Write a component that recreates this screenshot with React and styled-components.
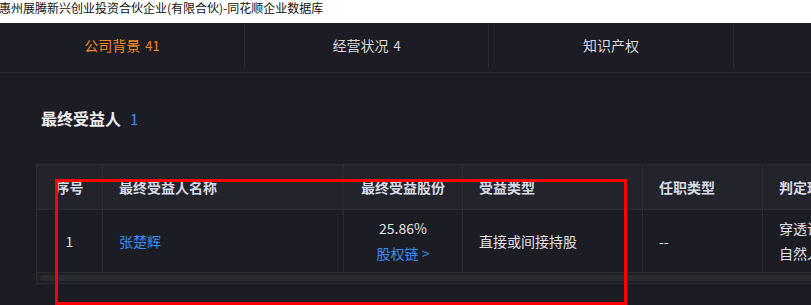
import React from 'react'
import styled, { createGlobalStyle } from 'styled-components'

const GlobalStyle = createGlobalStyle`
  html, body {
    margin: 0;
    padding: 0;
    background: #1c1c24;
    overflow: hidden;
    font-family: "Noto Sans CJK SC", "Noto Sans", sans-serif;
  }
`

const Page = styled.div`
  position: relative;
  width: 811px;
  height: 305px;
  overflow: hidden;
  background: #1c1c24;
`

const TitleBar = styled.div`
  height: 23px;
  background: #fff;
  color: #111;
  font-size: 12px;
  line-height: 16px;
  white-space: nowrap;
  margin-left: -1px;
`

const TabBar = styled.div`
  display: flex;
  padding-bottom: 5px;
  border-bottom: 1px solid #2a2b33;
`

const Tab = styled.div`
  flex: 0 0 ${p => p.w || 245}px;
  height: 44px;
  box-sizing: border-box;
  border-right: 1px solid #2a2b33;
  display: flex;
  align-items: center;
  justify-content: center;
  font-size: 14px;
  color: ${p => (p.active ? '#f08c28' : '#d8d8dc')};
  white-space: nowrap;

  b {
    font-weight: normal;
    margin-left: 5px;
    font-size: 13px;
  }
`

const Content = styled.div`
  padding: 33px 0 0 36px;
`

const SectionTitle = styled.h3`
  margin: 0 0 33px;
  padding-left: 5px;
  font-size: 16px;
  line-height: 24px;
  font-weight: bold;
  color: #ececf0;

  span {
    color: #3b8df2;
    font-weight: normal;
    font-size: 15px;
    margin-left: 9px;
  }
`

const TableBox = styled.div`
  width: 1000px;
  border: 1px solid #2a2b33;
`

const Row = styled.div`
  display: grid;
  grid-template-columns: 66px 241px 119px 180px 120px 274px;
  background: ${p => (p.head ? '#22232b' : '#1c1c24')};
  border-bottom: 1px solid #2a2b33;
  height: ${p => (p.head ? 44 : 62)}px;
`

const Cell = styled.div`
  box-sizing: border-box;
  border-right: 1px solid #2a2b33;
  display: flex;
  flex-direction: column;
  justify-content: center;
  align-items: ${p => (p.center ? 'center' : 'flex-start')};
  padding: ${p => (p.center ? '0' : '0 16px')};
  font-size: 14px;
  line-height: 25px;
  white-space: nowrap;
  overflow: hidden;
  color: ${p => (p.head ? '#d6dae6' : '#e0e0e6')};
  font-weight: ${p => (p.head ? 'bold' : 'normal')};
`

const Link = styled.a`
  color: #3b8df2;
  text-decoration: none;
`

const ScrollTrack = styled.div`
  height: 10px;
  background: #1f2027;
  padding: 2px 0 2px 3px;
  box-sizing: border-box;
`

const ScrollThumb = styled.div`
  height: 100%;
  background: #2a2b31;
  border-radius: 3px;
`

const Highlight = styled.div`
  position: absolute;
  left: 55px;
  top: 179px;
  width: 572px;
  height: 126px;
  box-sizing: border-box;
  border: 3px solid #ff0000;
  pointer-events: none;
`

export default function App() {
  return (
    <Page>
      <GlobalStyle />
      <TitleBar>惠州展腾新兴创业投资合伙企业(有限合伙)-同花顺企业数据库</TitleBar>
      <TabBar>
        <Tab active>公司背景<b>41</b></Tab>
        <Tab w={244}>经营状况<b>4</b></Tab>
        <Tab>知识产权</Tab>
        <Tab w={245} />
      </TabBar>
      <Content>
        <SectionTitle>最终受益人<span>1</span></SectionTitle>
        <TableBox>
          <Row head>
            <Cell head center>序号</Cell>
            <Cell head>最终受益人名称</Cell>
            <Cell head center>最终受益股份</Cell>
            <Cell head>受益类型</Cell>
            <Cell head>任职类型</Cell>
            <Cell head>判定理由</Cell>
          </Row>
          <Row>
            <Cell center>1</Cell>
            <Cell><Link href="#">张楚辉</Link></Cell>
            <Cell center>
              <div>25.86%</div>
              <Link href="#">股权链 &gt;</Link>
            </Cell>
            <Cell>直接或间接持股</Cell>
            <Cell>--</Cell>
            <Cell>
              <div>穿透识别持股比例最高的</div>
              <div>自然人</div>
            </Cell>
          </Row>
          <ScrollTrack>
            <ScrollThumb />
          </ScrollTrack>
        </TableBox>
      </Content>
      <Highlight />
    </Page>
  )
}
